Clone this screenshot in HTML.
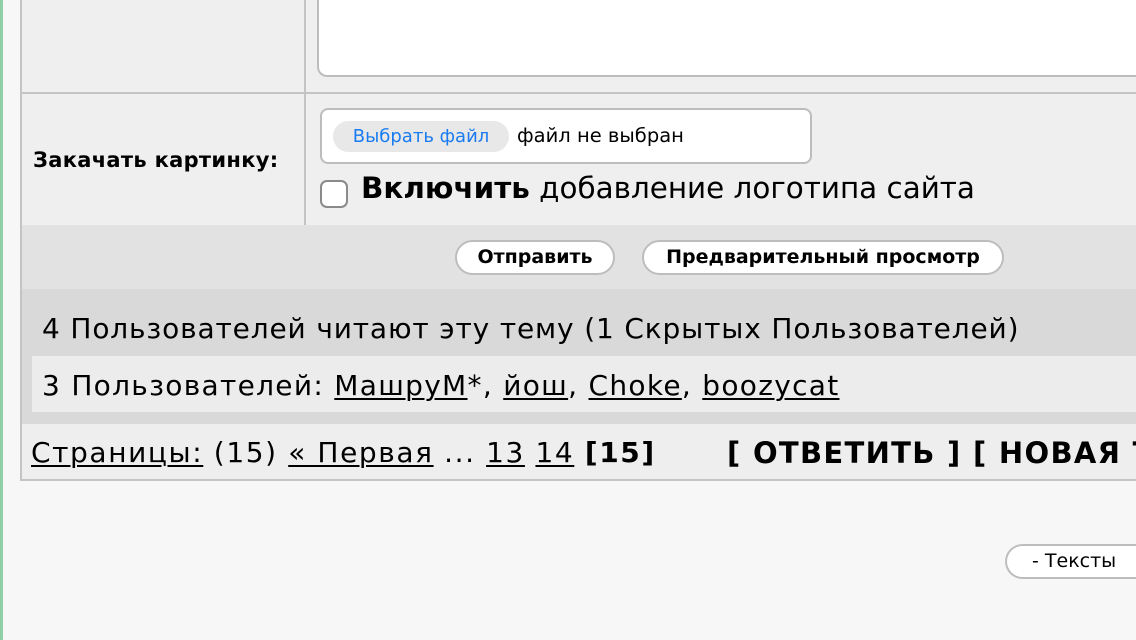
<!DOCTYPE html>
<html><head><meta charset="utf-8"><style>
html,body{margin:0;width:1136px;height:640px;overflow:hidden}
body{background:#f7f7f7;position:relative;font-family:"DejaVu Sans","Liberation Sans",sans-serif;color:#000}
#w{position:absolute;left:0;top:0;width:1136px;height:640px;overflow:hidden}
.a{position:absolute}
u{text-decoration:underline;text-decoration-thickness:2px;text-underline-offset:3px}
.btn{position:absolute;background:#fff;border:2px solid #bdbdbd;border-radius:18px;box-sizing:border-box;font-weight:bold;font-size:19px;text-align:center;line-height:30px}
</style></head><body><div id="w">
<div class="a" style="left:0;top:0;width:3px;height:640px;background:#8fcfa6"></div>
<div class="a" style="left:20px;top:0;width:1116px;height:481px;background:#efefef;border-left:2px solid #c4c4c4;border-bottom:2px solid #c4c4c4;box-sizing:border-box"></div>
<div class="a" style="left:304px;top:0;width:2px;height:225px;background:#c4c4c4"></div>
<div class="a" style="left:21px;top:92px;width:1115px;height:2px;background:#c4c4c4"></div>
<div class="a" style="left:317px;top:-10px;width:819px;height:87px;background:#fff;border:2px solid #bdbdbd;border-right:none;border-radius:10px 0 0 10px;box-sizing:border-box"></div>
<div class="a" style="left:33px;top:148px;font-size:21px;font-weight:bold;letter-spacing:0.3px">Закачать картинку:</div>
<div class="a" style="left:320px;top:108px;width:492px;height:56px;background:#fff;border:2px solid #bdbdbd;border-radius:8px;box-sizing:border-box"></div>
<div class="a" style="left:333px;top:121px;width:176px;height:31px;background:#e8e8e8;border-radius:16px;color:#1a7cf0;font-size:18px;line-height:31px;text-align:center">Выбрать файл</div>
<div class="a" style="left:517px;top:124px;font-size:19.5px">файл не выбран</div>
<div class="a" style="left:320px;top:180px;width:28px;height:28px;background:#fff;border:2px solid #8a8a8a;border-radius:7px;box-sizing:border-box"></div>
<div class="a" style="left:361px;top:171px;font-size:29.4px"><b>Включить</b> добавление логотипа сайта</div>
<div class="a" style="left:22px;top:225px;width:1114px;height:64px;background:#e2e2e2"></div>
<div class="btn" style="left:455px;top:240px;width:160px;height:35px">Отправить</div>
<div class="btn" style="left:642px;top:240px;width:362px;height:35px">Предварительный просмотр</div>
<div class="a" style="left:22px;top:289px;width:1114px;height:135px;background:#d9d9d9"></div>
<div class="a" style="left:42px;top:312px;font-size:28px;letter-spacing:0.85px;white-space:nowrap">4 Пользователей читают эту тему (1 Скрытых Пользователей)</div>
<div class="a" style="left:32px;top:356px;width:1104px;height:56px;background:#ececec"></div>
<div class="a" style="left:42px;top:369px;font-size:28px;letter-spacing:1.3px;white-space:nowrap">3 Пользователей: <u>МашруМ</u>*, <u>йош</u>, <u>Choke</u>, <u>boozycat</u></div>
<div class="a" style="left:22px;top:425px;width:1114px;height:54px;background:#eeeeee"></div>
<div class="a" style="left:31px;top:436px;font-size:28px;letter-spacing:1.6px;white-space:nowrap"><u>Страницы:</u> (15) <u>« Первая</u> ... <u>13</u> <u>14</u> <b>[15]</b></div>
<div class="a" style="left:727px;top:436px;width:409px;overflow:hidden;font-size:29px;font-weight:bold;letter-spacing:1.3px;white-space:nowrap">[ ОТВЕТИТЬ ] [ НОВАЯ ТЕМА ]</div>
<div class="a" style="left:1005px;top:544px;width:131px;height:35px;background:#fff;border:2px solid #bdbdbd;border-right:none;border-radius:18px 0 0 18px;box-sizing:border-box;font-size:19px;line-height:31px;padding-left:25px;white-space:nowrap;overflow:hidden">- Тексты</div>
</div></body></html>
